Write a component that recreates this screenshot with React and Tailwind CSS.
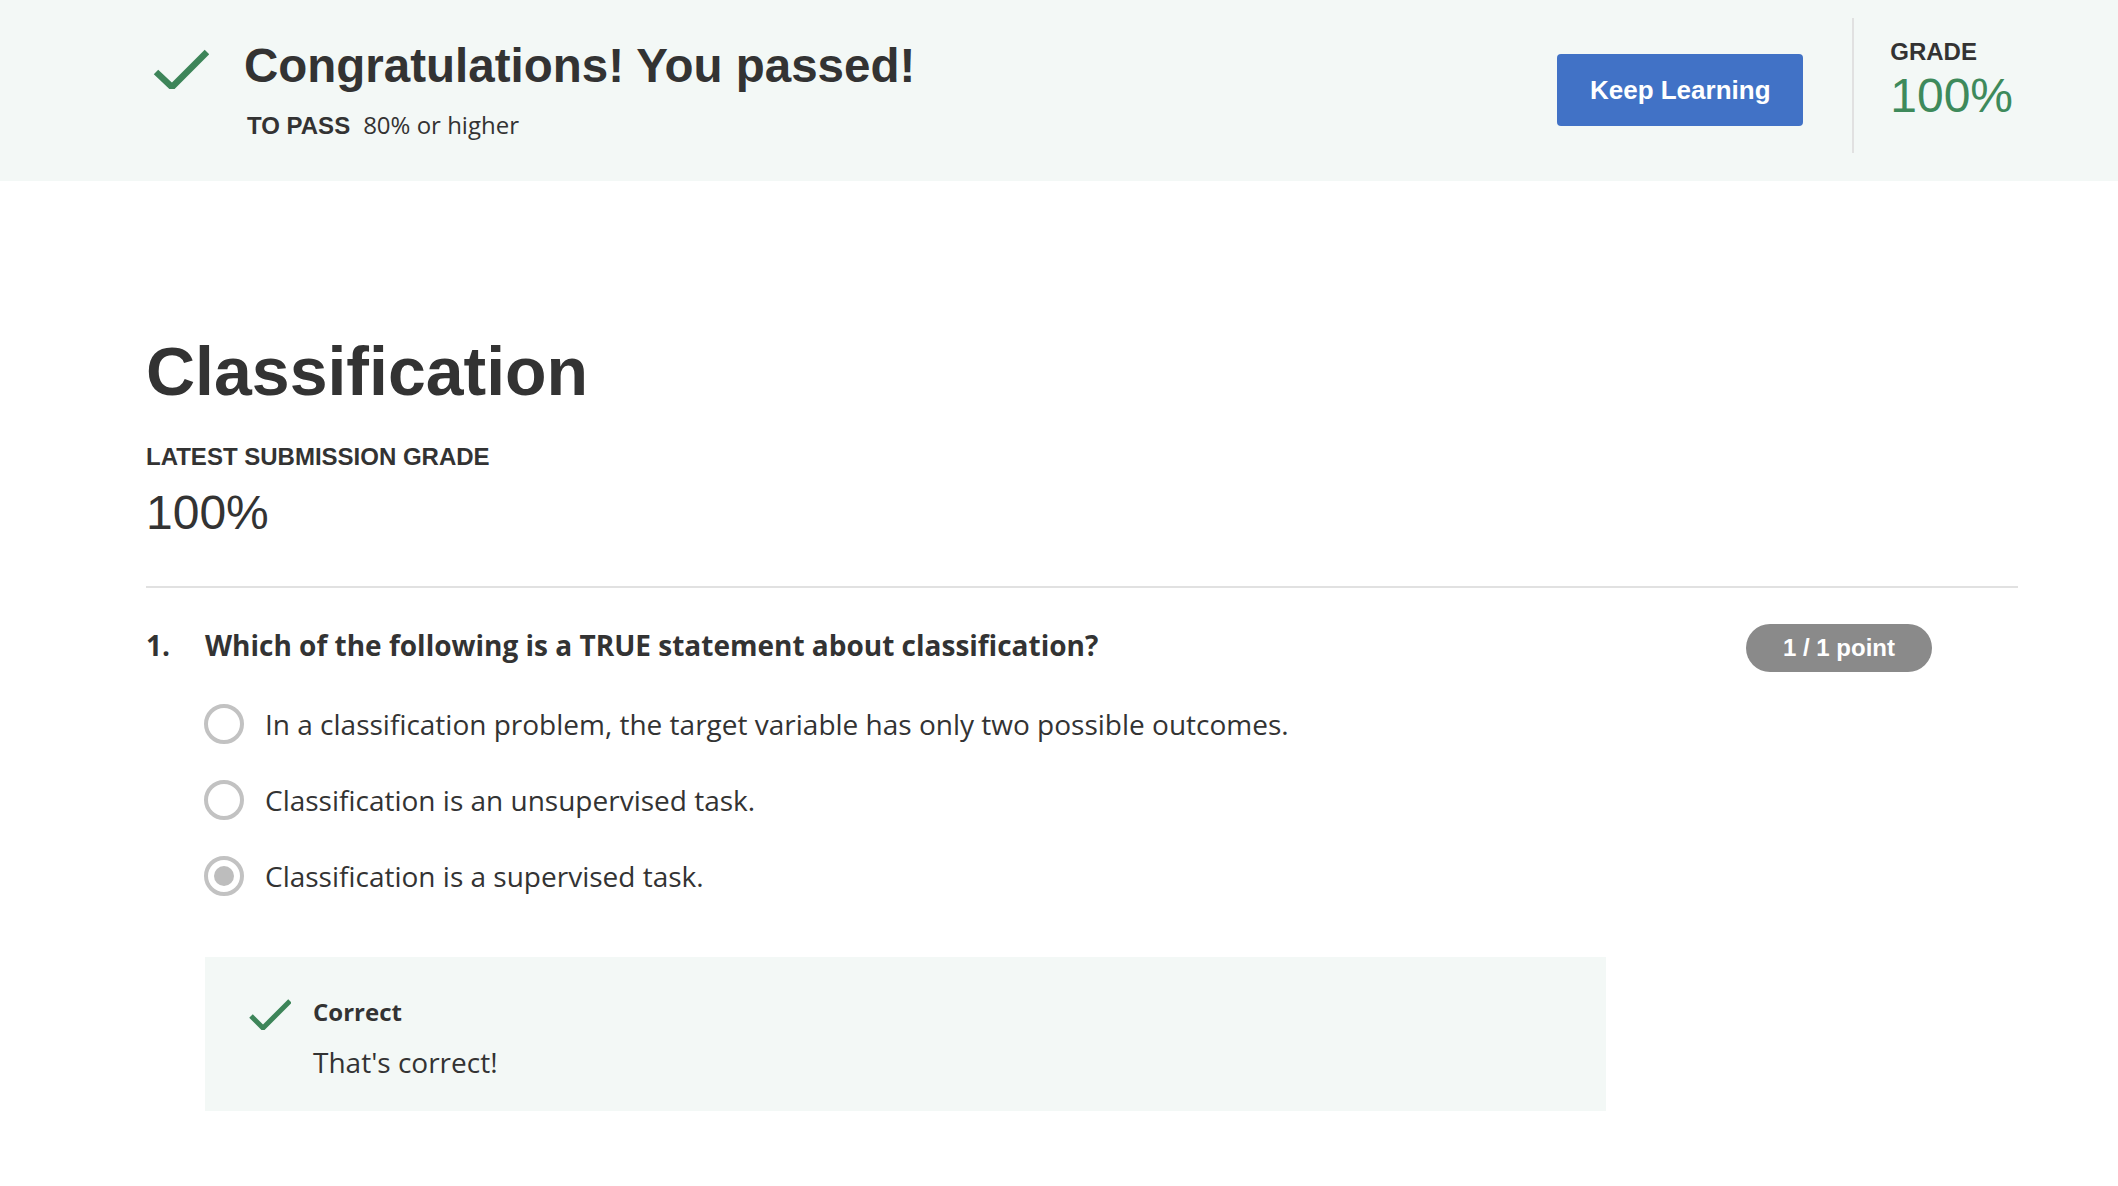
import React from 'react';

const sans = "font-['Liberation_Sans',Arial,sans-serif]";
const body = "font-['Open_Sans',sans-serif]";

// Green check mark used in the banner and feedback box
const CheckMark = ({ className = '', width, height, points, stroke }) => (
  <svg className={className} width={width} height={height} viewBox={`0 0 ${width} ${height}`} fill="none">
    <polyline points={points} stroke="#3d8559" strokeWidth={stroke} strokeLinejoin="miter" />
  </svg>
);

const options = [
  { id: 1, text: 'In a classification problem, the target variable has only two possible outcomes.', selected: false },
  { id: 2, text: 'Classification is an unsupervised task.', selected: false },
  { id: 3, text: 'Classification is a supervised task.', selected: true },
];

const App = () => {
  return (
    <div className="min-h-screen bg-white text-[#333]">
      {/* Pass banner */}
      <header className="flex h-[181px] bg-[#f3f8f6] pl-[153px] pr-[105px]">
        <div className="flex flex-1 items-start">
          <CheckMark
            className="mt-[47px]"
            width={56}
            height={42}
            points="3,25 19,40 54,5"
            stroke={6.5}
          />
          <div className="ml-[35px] pt-[38px]">
            <h1 className={`${sans} text-[47.5px] leading-[56px] font-bold`}>Congratulations! You passed!</h1>
            <p className="ml-[3px] mt-[15px] flex items-baseline leading-[32px]">
              <span className={`${sans} text-[24px] font-bold`}>TO PASS</span>
              <span className={`${body} ml-[13px] text-[24px]`}>80% or higher</span>
            </p>
          </div>
        </div>

        <div className="flex items-start">
          <button
            className={`${sans} mt-[54px] h-[72px] w-[246px] rounded-[4px] bg-[#4172c6] text-[26px] font-bold text-white`}
          >
            Keep Learning
          </button>
          <div className="ml-[49px] mt-[18px] h-[135px] w-[2px] bg-[#e1e1e1]" />
          <div className={`${sans} ml-[36px] mt-[38px]`}>
            <div className="text-[24px] leading-[28px] font-bold">GRADE</div>
            <div className="mt-[4px] text-[48px] leading-[52px] text-[#3e8a5b]">100%</div>
          </div>
        </div>
      </header>

      {/* Quiz result */}
      <main className="pl-[146px] pr-[100px] pt-[150px]">
        <h2 className={`${sans} text-[68px] leading-[80px] font-bold`}>Classification</h2>
        <div className={`${sans} mt-[32px] text-[24px] leading-[28px] font-bold`}>LATEST SUBMISSION GRADE</div>
        <div className={`${sans} mt-[14px] text-[48px] leading-[56px]`}>100%</div>

        <div className="mt-[45px] h-[2px] bg-[#e1e1e1]" />

        <div className={`${body} mt-[37px] flex items-start`}>
          <span className="w-[59px] text-[28px] leading-[40px] font-bold">1.</span>
          <span className="flex-1 text-[28px] leading-[40px] font-bold">
            Which of the following is a TRUE statement about classification?
          </span>
          <span
            className={`${sans} -mt-px mr-[86px] flex h-[48px] w-[186px] items-center justify-center rounded-full bg-[#8a8a8a] text-[24px] font-bold text-white`}
          >
            1 / 1 point
          </span>
        </div>

        <div className={`${body} ml-[58px] mt-[32px] flex flex-col gap-[36px]`}>
          {options.map((option) => (
            <label key={option.id} className="flex items-center">
              <span className="flex h-[40px] w-[40px] items-center justify-center rounded-full border-[4px] border-[#c2c2c2]">
                {option.selected && <span className="h-[20px] w-[20px] rounded-full bg-[#bdbdbd]" />}
              </span>
              <span className="ml-[21px] text-[28px] leading-[40px]">{option.text}</span>
            </label>
          ))}
        </div>

        {/* Feedback */}
        <div className={`${body} ml-[59px] mt-[61px] flex w-[1401px] items-start bg-[#f3f8f6] pb-[29px] pl-[44px] pt-[39px]`}>
          <CheckMark
            className="mt-[2px]"
            width={42}
            height={32}
            points="2,18 14,30 41,3"
            stroke={5}
          />
          <div className="ml-[22px]">
            <div className="text-[24px] leading-[32px] font-bold">Correct</div>
            <div className="mt-[14px] text-[28px] leading-[40px]">That's correct!</div>
          </div>
        </div>
      </main>
    </div>
  );
};

export default App;
